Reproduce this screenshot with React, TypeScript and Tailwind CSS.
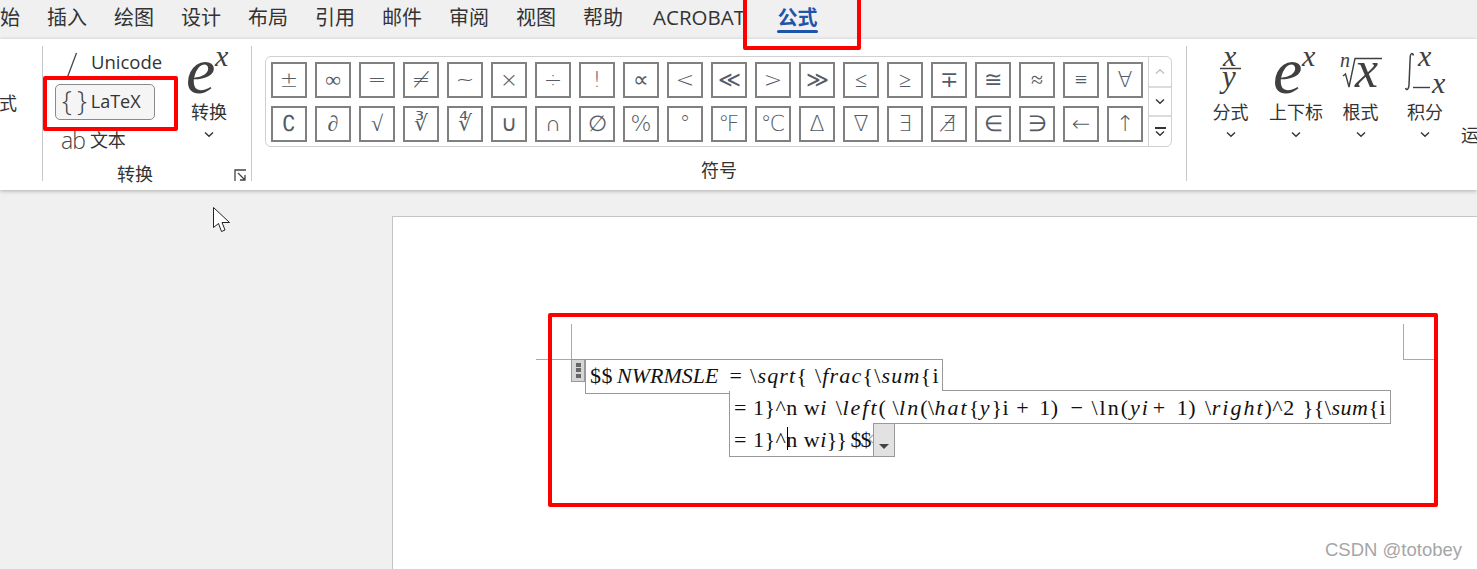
import React from "react";

const CJK = "font-['Noto_Sans_CJK_SC','Noto_Sans',sans-serif]";
const tabs = [
  { t: "始", w: "w-[47px]" },
  { t: "插入", w: "w-[67px]" },
  { t: "绘图", w: "w-[67px]" },
  { t: "设计", w: "w-[67px]" },
  { t: "布局", w: "w-[67px]" },
  { t: "引用", w: "w-[67px]" },
  { t: "邮件", w: "w-[67px]" },
  { t: "审阅", w: "w-[67px]" },
  { t: "视图", w: "w-[67px]" },
  { t: "帮助", w: "w-[70px]" },
  { t: "ACROBAT", w: "w-[124px]" },
];
const row1 = ["±", "∞", "=", "≠", "~", "×", "÷", "!", "∝", "<", "≪", ">", "≫", "≤", "≥", "∓", "≅", "≈", "≡", "∀"];
const row2 = ["∁", "∂", "√", "∛", "∜", "∪", "∩", "∅", "%", "°", "℉", "℃", "∆", "∇", "∃", "∄", "∈", "∋", "←", "↑"];

function Chevron({ className = "" }: { className?: string }) {
  return (
    <svg width="10" height="7" viewBox="0 0 10 7" className={className}>
      <path d="M1 1.5 L5 5.2 L9 1.5" fill="none" stroke="#333" strokeWidth="1.4" />
    </svg>
  );
}

function Sym({ s }: { s: string }) {
  return (
    <div className="w-9 h-9 border-[2.5px] border-[#808080] flex items-center justify-center text-[22px] leading-none text-[#555c66] font-['DejaVu_Sans','Liberation_Serif',serif] font-extralight overflow-hidden">
      <span>{s}</span>
    </div>
  );
}

function Big({ w, label, icon }: { w: string; label: string; icon: React.ReactNode }) {
  return (
    <div className={`${w} flex flex-col items-center shrink-0`}>
      <div className="h-[52px] mt-[2px] flex items-end">{icon}</div>
      <div className={`${CJK} text-[18px] leading-[24px] text-[#333] mt-[-1px] whitespace-nowrap`}>{label}</div>
      <Chevron className="mt-[8px]" />
    </div>
  );
}

const serif = { fontFamily: "'Liberation Serif', serif", fontStyle: "italic", fill: "#404040" } as const;

function EIcon() {
  return (
    <svg width={44} height={52} viewBox="0 0 44 52" className="overflow-visible">
      <text x="-1" y="45" fontSize="66" style={serif}>e</text>
      <text x="28" y="18" fontSize="30" style={serif}>x</text>
    </svg>
  );
}

function Eq({ children }: { children: React.ReactNode }) {
  return <i className="italic">{children}</i>;
}

function Wide({ children }: { children: React.ReactNode }) {
  return <i className="italic tracking-[2px]">{children}</i>;
}

export default function App() {
  return (
    <div className="relative w-[1477px] h-[569px] overflow-hidden bg-[#f0f0f0] flex flex-col font-['Noto_Sans',sans-serif]">
      {/* tab strip */}
      <div className={`h-[39px] shrink-0 flex items-start pt-[3px] ${CJK} text-[20px] leading-[28px] text-[#333]`}>
        {tabs.map((t) => (
          <div key={t.t} className={`${t.w} shrink-0 whitespace-nowrap ${t.t === "ACROBAT" ? "font-['Open_Sans',sans-serif] text-[20.5px]" : ""}`}>
            {t.t}
          </div>
        ))}
        <div className="w-[41px] shrink-0 font-bold text-[#1f55a8] flex flex-col items-center">
          <span>公式</span>
          <span className="block w-[41px] h-[3px] bg-[#1f55a8] rounded-sm mt-[-1px]" />
        </div>
      </div>

      {/* ribbon */}
      <div className="relative z-10 h-[151px] shrink-0 bg-white shadow-[0_1px_4px_rgba(0,0,0,0.28)] flex overflow-hidden">
        <div className="w-[43px] shrink-0 border-r border-[#c8c8c8] my-[7px] h-[135px] relative overflow-hidden">
          <span className={`absolute left-[-1px] top-[44px] ${CJK} text-[18px] leading-[24px] text-[#333]`}>式</span>
        </div>

        {/* convert group */}
        <div className="w-[209px] shrink-0 border-r border-[#c8c8c8] my-[7px] h-[135px] flex flex-col">
          <div className="h-[112px] flex">
            <div className="w-[144px] shrink-0 flex flex-col pl-[12px]">
              <div className="h-[31px] flex items-center pt-[1px]">
                <svg width="14" height="26" viewBox="0 0 14 26" className="ml-[10px] mt-[5px] shrink-0">
                  <path d="M11.5 1 L2.5 25" stroke="#444" strokeWidth="1.3" fill="none" />
                </svg>
                <span className="ml-[12px] text-[18.5px] leading-none text-[#333] font-['Open_Sans',sans-serif]">Unicode</span>
              </div>
              <div className="h-9 w-[100px] mt-[7px] rounded-[5px] border border-[#8a8a8a] bg-[#f5f5f5] flex items-center">
                <span className="ml-[6px] text-[28px] leading-none text-[#444] font-['Open_Sans',sans-serif] font-light tracking-[5px] mt-[-4px]">{"{}"}</span>
                <span className="ml-[-1px] text-[18px] leading-none text-[#333] font-['Open_Sans',sans-serif] mt-[-2px]">LaTeX</span>
              </div>
              <div className="h-[32px] mt-[4px] flex items-center">
                <span className="ml-[6px] text-[23px] leading-none text-[#444] font-['Open_Sans',sans-serif] font-light tracking-[-1px]">ab</span>
                <span className={`ml-[5px] mt-[-3px] ${CJK} text-[18px] leading-none text-[#333]`}>文本</span>
              </div>
            </div>
            <Big w="w-[44px]" label="转换" icon={<EIcon />} />
          </div>
          <div className="flex items-start h-[23px] pt-[3px]">
            <span className={`ml-[74px] ${CJK} text-[18px] leading-[24px] text-[#333]`}>转换</span>
            <svg width="13" height="13" viewBox="0 0 13 13" className="ml-[81px] mt-[8px]">
              <path d="M1 12 V1 H12 M4 4 L11 11 M11 6 V11 H6" fill="none" stroke="#444" strokeWidth="1.3" />
            </svg>
          </div>
        </div>

        {/* symbols group */}
        <div className="w-[935px] shrink-0 border-r border-[#c8c8c8] my-[7px] h-[135px] flex flex-col">
          <div className="ml-[13px] mt-[10px] w-[907px] h-[94px] border border-[#d0d0d0] rounded-[6px] flex">
            <div className="w-[882px] shrink-0 flex flex-col gap-2 pl-[5px] pt-[5px]">
              <div className="flex gap-2">{row1.map((s) => <Sym key={s} s={s} />)}</div>
              <div className="flex gap-2">{row2.map((s) => <Sym key={s} s={s} />)}</div>
            </div>
            <div className="flex-1 border-l border-[#d0d0d0] flex flex-col">
              <div className="h-[31px] border-b-2 border-[#dcdcdc] flex items-center justify-center">
                <Chevron className="rotate-180 opacity-30" />
              </div>
              <div className="h-[29px] border-b-2 border-[#dcdcdc] flex items-center justify-center">
                <Chevron />
              </div>
              <div className="flex-1 flex flex-col items-center justify-center">
                <span className="block w-[11px] h-[2px] bg-[#333] mb-[1px]" />
                <Chevron />
              </div>
            </div>
          </div>
          <div className={`mt-[10px] ml-[449px] ${CJK} text-[18px] leading-[24px] text-[#333]`}>符号</div>
        </div>

        {/* structures */}
        <div className="flex-1 flex pl-[11px] pt-[7px] items-start">
          <Big
            w="w-[65px]"
            label="分式"
            icon={
              <svg width="26" height="52" viewBox="0 0 26 52" className="overflow-visible">
                <text x="5" y="18" fontSize="30" style={serif}>x</text>
                <path d="M2 20.5 H23" stroke="#404040" strokeWidth="1.5" />
                <text x="4" y="39" fontSize="31" style={serif}>y</text>
              </svg>
            }
          />
          <Big w="w-[66px]" label="上下标" icon={<EIcon />} />
          <Big
            w="w-[63px]"
            label="根式"
            icon={
              <svg width="44" height="52" viewBox="0 0 44 52" className="overflow-visible">
                <text x="1" y="19" fontSize="20" style={serif}>n</text>
                <path d="M4 28 L6.5 26 L10 39 L16 10.5 H43" fill="none" stroke="#404040" strokeWidth="1.4" />
                <text x="16" y="39" fontSize="52" style={serif}>x</text>
              </svg>
            }
          />
          <Big
            w="w-[66px]"
            label="积分"
            icon={
              <svg width="44" height="52" viewBox="0 0 44 52" className="overflow-visible">
                <path d="M10.5 7.5 C9.5 4.5 7.5 5 7.2 9 L6 37 C5.8 42 3.5 42.5 2.5 40" fill="none" stroke="#404040" strokeWidth="1.5" />
                <text x="15" y="18" fontSize="30" style={serif}>x</text>
                <path d="M10 39.5 H27" stroke="#404040" strokeWidth="1.4" />
                <text x="29" y="45" fontSize="30" style={serif}>x</text>
              </svg>
            }
          />
          <div className={`mt-[76px] ml-[3px] ${CJK} text-[18px] leading-[24px] text-[#333] whitespace-nowrap`}>运</div>
        </div>
      </div>

      {/* document area */}
      <div className="flex-1 pl-[392px] pt-[26px] min-h-0 overflow-hidden">
        <div className="h-[400px] bg-white border-t border-l border-[#c4c4c4] pl-[192px] pt-[142px] font-['Liberation_Serif',serif] text-[22px] tracking-[0.5px] leading-[24px] text-[#111]">
          {/* line 1 */}
          <div className="h-[34px] w-[358px] border border-b-0 border-[#999] pl-[4px] pt-[4px] whitespace-nowrap">
            $$ <i className="italic tracking-[0px] ml-[-2px]">NWRMSLE</i><span className="ml-[11px]">=</span>
            <span className="tracking-[1.2px] ml-[1px]"> \<Eq>sqrt</Eq>{"{"} \<Eq>frac</Eq>{"{"}\<Eq>sum</Eq>{"{"}i</span>
          </div>
          <div className="flex h-0">
            <div className="w-[144px] h-0 border-b border-[#999] shrink-0" />
          </div>
          {/* line 2 */}
          <div className="ml-[144px] mt-[-3px] h-[34px] w-[662px] border border-[#999] bg-white pl-[4px] pt-[5px] whitespace-nowrap relative">
            <span className="absolute left-[-1px] top-[-1px] w-[213px] h-px bg-white" />
            = 1{"}"}^n w<Eq>i</Eq><span className="ml-[3px]"> \</span><Wide>left</Wide>( \<Wide>ln</Wide>(\<Wide>hat</Wide>{"{"}<Wide>y</Wide>{"}"}i<span className="ml-[7px]">+</span><span className="ml-[10px]">1)</span><span className="ml-[12px]">−</span><span className="ml-[8px] tracking-[2px]">\ln(</span><Wide>yi</Wide><span className="ml-[3px]">+</span><span className="ml-[5px]"> 1)</span><span className="ml-[9px]">\</span><Wide>right</Wide>)^2<span className="ml-[8px]">{"}{"}</span>\<Eq>sum</Eq>{"{"}i
          </div>
          {/* line 3 */}
          <div className="ml-[144px] mt-[-1px] flex h-[34px]">
            <div className="w-[144px] border border-t-0 border-r-0 border-[#999] bg-white pl-[4px] pt-[5px] whitespace-nowrap relative">
              = 1{"}"}^n w<Eq>i</Eq><span className="tracking-[-1px]">{"}}"} $$</span>
              <span className="absolute left-[57px] top-[4px] w-px h-[23px] bg-black" />
              <svg width="6" height="10" viewBox="0 0 6 10" className="absolute left-[138px] top-[11px]">
                <path d="M5 1 L1 5 L5 9" fill="none" stroke="#aaa" strokeWidth="1.2" />
              </svg>
            </div>
            <div className="w-[22px] border border-t-0 border-[#999] bg-[#e2e2e2] flex items-end justify-center pb-[7px]">
              <span className="block w-0 h-0 border-l-[5px] border-r-[5px] border-t-[5px] border-l-transparent border-r-transparent border-t-[#444]" />
            </div>
          </div>
        </div>
      </div>

      {/* overlays on the document */}
      <div className="absolute left-[571px] top-[359px] w-[14px] h-[23px] bg-[#d6d6d6] border border-[#999] flex flex-col items-center justify-around py-[2px] z-20">
        <span className="block w-[5px] h-[4px] bg-[#666]" />
        <span className="block w-[5px] h-[4px] bg-[#666]" />
        <span className="block w-[5px] h-[4px] bg-[#666]" />
      </div>
      <div className="absolute left-[571px] top-[324px] w-px h-[35px] bg-[#aaa] z-20" />
      <div className="absolute left-[536px] top-[359px] w-[35px] h-px bg-[#aaa] z-20" />
      <div className="absolute left-[1403px] top-[324px] w-px h-[35px] bg-[#aaa] z-20" />
      <div className="absolute left-[1403px] top-[359px] w-[35px] h-px bg-[#aaa] z-20" />

      {/* mouse pointer */}
      <svg width="20" height="28" viewBox="0 0 20 28" className="absolute left-[212px] top-[206px] z-20">
        <path d="M1.5 1.5 V21.5 L6.5 17.5 L9.5 25.5 L13 24 L10 16.5 L17.5 16.5 Z" fill="#fff" stroke="#222" strokeWidth="1" />
      </svg>

      {/* red annotations */}
      <div className="absolute left-[743px] top-[-6px] w-[118px] h-[56px] border-4 border-[#ff0000] rounded-[2px] z-30" />
      <div className="absolute left-[43px] top-[76px] w-[135px] h-[55px] border-4 border-[#ff0000] rounded-[2px] z-30" />
      <div className="absolute left-[548px] top-[313px] w-[890px] h-[194px] border-4 border-[#ff0000] rounded-[2px] z-30" />

      {/* watermark */}
      <div className="absolute left-[1325px] top-[539px] text-[18.5px] leading-[22px] text-[#a6a6a6] font-['Liberation_Sans',sans-serif] z-30">CSDN @totobey</div>
    </div>
  );
}
